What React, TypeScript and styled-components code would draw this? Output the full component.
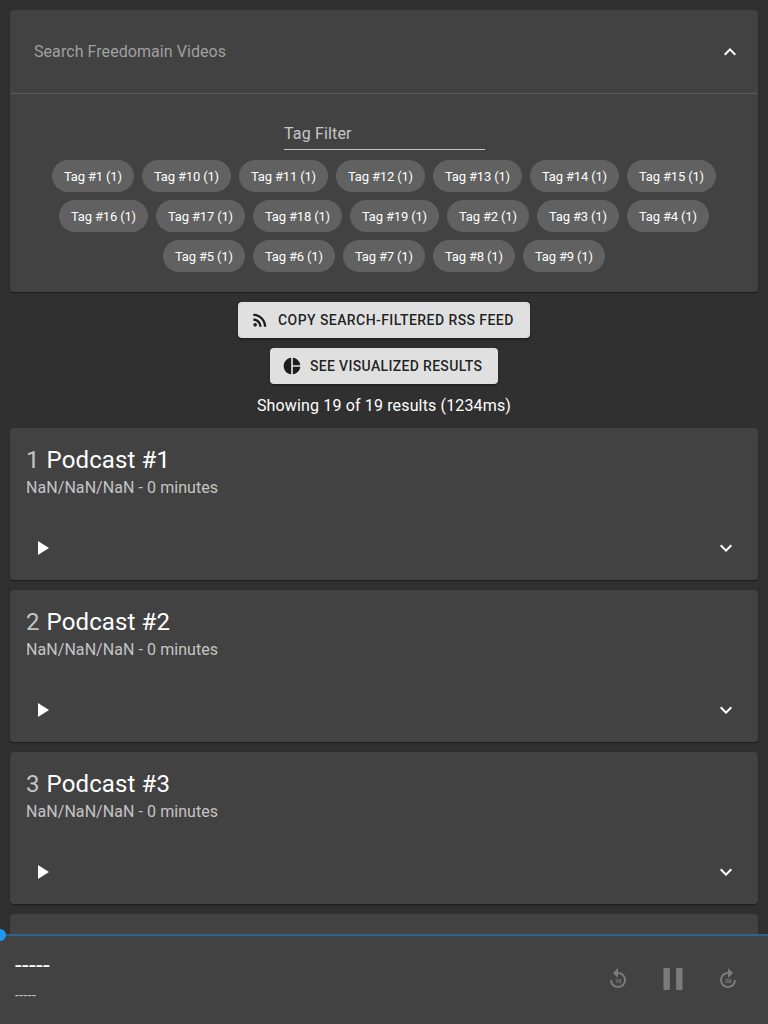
import React from 'react';
import styled, { createGlobalStyle } from 'styled-components';
import { MdExpandLess, MdExpandMore, MdPause, MdPlayArrow, MdRssFeed } from 'react-icons/md';

const GlobalStyle = createGlobalStyle`
  *, *::before, *::after { box-sizing: border-box; }
  html, body { height: 100%; overflow: hidden; }
  body {
    margin: 0;
    background: #303030;
    color: #fff;
    font: 400 16px/24px Roboto, sans-serif;
    letter-spacing: 0.00938em;
    -webkit-font-smoothing: antialiased;
  }
`;

const Page = styled.div`
  height: 100vh;
  display: flex;
  flex-direction: column;
`;

const Content = styled.main`
  flex: 1;
  min-height: 0;
  overflow: hidden;
  padding: 10px 10px 0;
  display: flex;
  flex-direction: column;
  align-items: center;
  gap: 10px;
`;

const Paper = styled.section`
  width: 100%;
  flex-shrink: 0;
  background: #424242;
  border-radius: 4px;
  box-shadow: 0 2px 1px -1px rgba(0, 0, 0, 0.2), 0 1px 1px rgba(0, 0, 0, 0.14), 0 1px 3px rgba(0, 0, 0, 0.12);
`;

const SearchHeader = styled.div`
  height: 84px;
  padding: 0 16px 0 24px;
  display: flex;
  align-items: center;
  border-bottom: 1px solid #5b5b5b;
`;

const TextInput = styled.input`
  min-width: 0;
  padding: 0;
  border: 0;
  outline: 0;
  background: none;
  color: #fff;
  font: inherit;
`;

const SearchInput = styled(TextInput)`
  flex: 1;
  letter-spacing: 0.065px;
  &::placeholder { color: #a0a0a0; opacity: 1; }
`;

const TagInput = styled(TextInput)`
  width: 201px;
  height: 32px;
  margin: 0 0 6px 1px;
  border-bottom: 1px solid #c6c6c6;
  letter-spacing: 0.15px;
  &::placeholder { color: #c6c6c6; opacity: 1; }
`;

const IconButton = styled.button<{ $size?: number; $pad?: number }>`
  display: flex;
  border: 0;
  background: none;
  color: inherit;
  padding: ${({ $pad = 12 }) => $pad}px;
  svg {
    width: ${({ $size = 24 }) => $size}px;
    height: ${({ $size = 24 }) => $size}px;
  }
`;

const Filters = styled.div`
  padding: 24px 36px 16px;
  display: flex;
  flex-direction: column;
  align-items: center;
`;

const Tags = styled.div`
  display: flex;
  flex-wrap: wrap;
  justify-content: center;
`;

const Tag = styled.span<{ $wide: boolean }>`
  width: ${({ $wide }) => ($wide ? 89 : 82)}px;
  height: 32px;
  margin: 4px;
  padding: 1px 0 0 12px;
  border-radius: 16px;
  background: #616161;
  font-size: 13px;
  line-height: 32px;
  letter-spacing: -0.17px;
  white-space: nowrap;
`;

const Button = styled.button<{ $width: number; $tracking: number }>`
  flex-shrink: 0;
  width: ${({ $width }) => $width}px;
  height: 36px;
  padding: 6px 0 6px 12px;
  display: flex;
  align-items: center;
  gap: 8px;
  border: 0;
  border-radius: 4px;
  background: #e0e0e0;
  color: rgba(0, 0, 0, 0.87);
  font: 500 14px/24px Roboto, sans-serif;
  letter-spacing: ${({ $tracking }) => $tracking}px;
  text-transform: uppercase;
  white-space: nowrap;
  box-shadow: 0 3px 1px -2px rgba(0, 0, 0, 0.2), 0 2px 2px rgba(0, 0, 0, 0.14), 0 1px 5px rgba(0, 0, 0, 0.12);
  svg { width: 20px; height: 20px; flex: none; }
`;

const Status = styled.p`
  margin: 0;
`;

const Info = styled.div`
  padding: 16px;
`;

const Title = styled.h2`
  margin: 0;
  display: flex;
  gap: 7px;
  font-size: 24px;
  font-weight: 400;
  line-height: 32px;
  letter-spacing: 0.12px;
`;

const Muted = styled.span`
  color: rgba(255, 255, 255, 0.7);
`;

const Meta = styled.p`
  margin: 0;
  color: rgba(255, 255, 255, 0.7);
  letter-spacing: 0.065px;
`;

const Actions = styled.div`
  padding: 8px;
  display: flex;
  justify-content: space-between;
`;

const Player = styled.footer`
  position: relative;
  flex: none;
  height: 90px;
  padding: 0 16px 0 15px;
  display: flex;
  align-items: center;
  justify-content: space-between;
  background: #424242;
`;

const Rail = styled.div`
  position: absolute;
  top: 0;
  left: 0;
  right: 0;
  height: 2px;
  background: #32628a;
`;

const Thumb = styled.span`
  position: absolute;
  top: -5px;
  left: -6px;
  width: 12px;
  height: 12px;
  border-radius: 50%;
  background: #2196f3;
`;

const Track = styled.div`
  display: flex;
  flex-direction: column;
  gap: 4px;
  padding-bottom: 4px;
`;

const TrackTitle = styled.span`
  font-size: 24px;
  line-height: 32px;
  letter-spacing: 0.38px;
`;

const TrackMeta = styled(Muted)`
  font-size: 14px;
  line-height: 20px;
  letter-spacing: 0.35px;
`;

const Controls = styled.div`
  display: flex;
  align-items: center;
  color: #7b7b7b;
`;

const SkipLabel = styled.text`
  font: 700 6px Roboto, sans-serif;
  letter-spacing: 0;
`;

const tags = [1, 10, 11, 12, 13, 14, 15, 16, 17, 18, 19, 2, 3, 4, 5, 6, 7, 8, 9];

function PieIcon() {
  return (
    <svg viewBox="0 0 24 24" fill="currentColor">
      <path d="M11 2v20c-5.07-.5-9-4.79-9-10s3.93-9.5 9-10zm2.03 0v8.99H22c-.47-4.74-4.24-8.52-8.97-8.99zm0 11.01V22c4.74-.47 8.5-4.25 8.97-8.99h-8.97z" />
    </svg>
  );
}

function SkipIcon({ seconds, forward = false }: { seconds: number; forward?: boolean }) {
  return (
    <svg viewBox="0 0 24 24" fill="currentColor">
      <path
        transform={forward ? 'translate(24 0) scale(-1 1)' : undefined}
        d="M12 5V1L7 6l5 5V7c3.3 0 6 2.7 6 6s-2.7 6-6 6-6-2.7-6-6H4c0 4.4 3.6 8 8 8s8-3.6 8-8-3.6-8-8-8z"
      />
      <SkipLabel x="12.1" y="16" textAnchor="middle">{seconds}</SkipLabel>
    </svg>
  );
}

function Podcast({ index }: { index: number }) {
  return (
    <Paper>
      <Info>
        <Title><Muted>{index}</Muted><span>Podcast #{index}</span></Title>
        <Meta>NaN/NaN/NaN - 0 minutes</Meta>
      </Info>
      <Actions>
        <IconButton aria-label="Play"><MdPlayArrow /></IconButton>
        <IconButton aria-label="Expand"><MdExpandMore /></IconButton>
      </Actions>
    </Paper>
  );
}

export default function App() {
  return (
    <Page>
      <GlobalStyle />
      <Content>
        <Paper>
          <SearchHeader>
            <SearchInput placeholder="Search Freedomain Videos" />
            <IconButton $pad={0} aria-label="Collapse"><MdExpandLess /></IconButton>
          </SearchHeader>
          <Filters>
            <TagInput placeholder="Tag Filter" />
            <Tags>
              {tags.map((n) => <Tag key={n} $wide={n > 9}>Tag #{n} (1)</Tag>)}
            </Tags>
          </Filters>
        </Paper>
        <Button $width={292} $tracking={0.43}><MdRssFeed />Copy search-filtered RSS feed</Button>
        <Button $width={228} $tracking={0.33}><PieIcon />See visualized results</Button>
        <Status>Showing 19 of 19 results (1234ms)</Status>
        {[1, 2, 3].map((n) => <Podcast key={n} index={n} />)}
        <Paper as="div"><Info /></Paper>
      </Content>
      <Player>
        <Rail />
        <Thumb />
        <Track>
          <TrackTitle>-----</TrackTitle>
          <TrackMeta>-----</TrackMeta>
        </Track>
        <Controls>
          <IconButton aria-label="Back 10 seconds"><SkipIcon seconds={10} /></IconButton>
          <IconButton $size={38} aria-label="Pause"><MdPause /></IconButton>
          <IconButton aria-label="Forward 30 seconds"><SkipIcon seconds={30} forward /></IconButton>
        </Controls>
      </Player>
    </Page>
  );
}
